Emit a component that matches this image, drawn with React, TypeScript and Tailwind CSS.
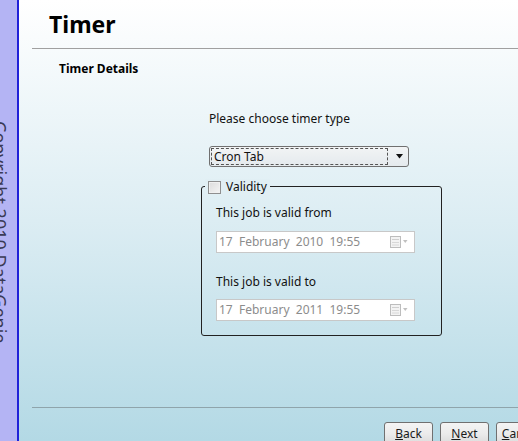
import React from "react";

const font = { fontFamily: '"Noto Sans", "Open Sans", sans-serif' };

function Checkbox() {
  return (
    <span className="inline-block w-[13px] h-[13px] border border-[#8f8f8f] bg-gradient-to-br from-[#dcdcdc] to-[#f4f4f4] shadow-[inset_0_0_0_1px_#f0f0f0]" />
  );
}

function DateBox({ text }: { text: string }) {
  return (
    <div className="w-[199px] h-[22px] border border-[#c8c8c8] bg-white flex items-center pl-[2px] pr-[6px]">
      <span className="flex-1 text-[12px] text-[#8c8c8c] whitespace-pre leading-none">{text}</span>
      <svg width="18" height="12" viewBox="0 0 18 12">
        <rect x="0.5" y="0.5" width="10" height="11" fill="#f3f3f3" stroke="#bdbdbd" />
        <line x1="2" y1="3.5" x2="9" y2="3.5" stroke="#cfcfcf" />
        <line x1="2" y1="6.5" x2="9" y2="6.5" stroke="#d8d8d8" />
        <line x1="2" y1="9" x2="9" y2="9" stroke="#d8d8d8" />
        <path d="M13 4 L17.5 4 L15.25 7 Z" fill="#c0c0c0" />
      </svg>
    </div>
  );
}

function Btn({ u, rest }: { u: string; rest: string }) {
  return (
    <div className="w-[49px] h-[24px] shrink-0 rounded-[3px] border border-[#707070] bg-gradient-to-b from-[#f4f4f4] via-[#ebebeb] to-[#d9d9d9] flex items-start justify-center pt-[3px] text-[12px] text-[#1a1a1a] leading-[16px]">
      <span>
        <span className="underline">{u}</span>
        {rest}
      </span>
    </div>
  );
}

export default function App() {
  return (
    <div className="w-[518px] h-[441px] flex overflow-hidden" style={font}>
      <div className="w-[19px] shrink-0 bg-[#b4b4f4] border-r-2 border-[#2020d8] relative overflow-hidden">
        <div
          className="absolute left-[-9px] top-[121px] text-[18px] leading-[18px] text-[#3a3a55] whitespace-nowrap"
          style={{ writingMode: "vertical-rl" }}
        >
          Copyright 2010 DataGenie
        </div>
      </div>
      <div className="flex-1 flex flex-col bg-gradient-to-b from-white via-[#dcedf3] to-[#b3d9e5] text-[#111]">
        <div className="h-[48px] pl-[30px] pt-[8px] text-[23px] font-bold leading-[32px] text-black">Timer</div>
        <div className="ml-[13px] border-t border-[#a0a0a0]" />
        <div className="pl-[40px] pt-[12px] text-[12px] font-bold leading-[16px] text-black">Timer Details</div>
        <div className="pl-[190px] pt-[34px] flex flex-col">
          <div className="text-[12px] leading-[16px]">Please choose timer type</div>
          <div className="mt-[19px] w-[200px] h-[21px] rounded-[3px] border border-[#707070] bg-gradient-to-b from-[#f2f4f5] to-[#e4eaed] flex items-center pl-[1px] pr-[4px]">
            <div className="w-[177px] h-[17px] border border-dashed border-[#555] flex items-center pl-[2px] text-[12px] leading-none">
              Cron Tab
            </div>
            <div className="flex-1 flex justify-end">
              <svg width="8" height="5" viewBox="0 0 8 5">
                <path d="M0 0 L7 0 L3.5 4.5 Z" fill="#111" />
              </svg>
            </div>
          </div>
          <div className="relative mt-[19px] ml-[-8px] w-[241px] h-[150px] rounded-[3px] border border-[#222] pl-[14px] pt-[18px]">
            <div className="absolute left-[3px] top-[-8px] flex items-center gap-[5px] px-[3px] bg-[#e1eff4] text-[12px] leading-[16px]">
              <Checkbox />
              <span>Validity</span>
            </div>
            <div className="text-[12px] leading-[16px]">This job is valid from</div>
            <div className="mt-[10px]">
              <DateBox text="17  February  2010  19:55" />
            </div>
            <div className="mt-[21px] text-[12px] leading-[16px]">This job is valid to</div>
            <div className="mt-[9px]">
              <DateBox text="17  February  2011  19:55" />
            </div>
          </div>
        </div>
        <div className="flex-1" />
        <div className="ml-[13px] border-t border-[#8fa4ab]" />
        <div className="h-[33px] pt-[14px] pl-[365px] flex gap-[7px]">
          <Btn u="B" rest="ack" />
          <Btn u="N" rest="ext" />
          <Btn u="C" rest="ancel" />
        </div>
      </div>
    </div>
  );
}
